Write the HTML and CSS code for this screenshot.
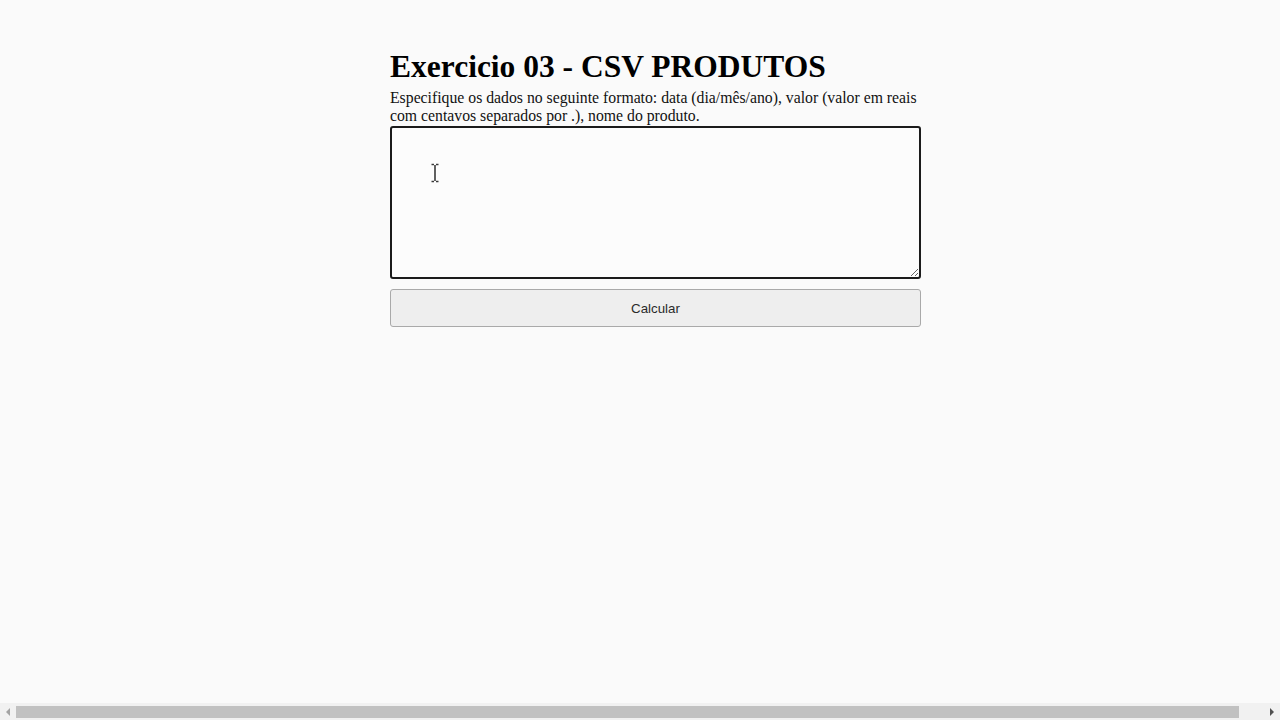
FILE: index.html
```html
<!DOCTYPE html>
<html lang="pt-BR">
<head>
<meta charset="utf-8">
<title>Exercicio 03 - CSV PRODUTOS</title>
<link rel="stylesheet" href="styles.css">
</head>
<body>
<div class="page">
  <main class="container">
    <h1 class="title">Exercicio 03 - CSV PRODUTOS</h1>
    <p class="hint">Especifique os dados no seguinte formato: data (dia/mês/ano), valor (valor em reais com centavos separados por .), nome do produto.</p>
    <textarea class="input"></textarea>
    <button class="btn" type="button">Calcular</button>
  </main>
</div>
<svg class="ibeam" width="10" height="20" viewBox="0 0 10 20" aria-hidden="true">
  <path d="M1.5 1.5h2.5M6 1.5h2.5M5 2v16M1.5 18.5h2.5M6 18.5h2.5" stroke="#fff" stroke-width="3.2" fill="none"/>
  <path d="M1.5 1.5h2.5M6 1.5h2.5M5 2v16M1.5 18.5h2.5M6 18.5h2.5" stroke="#3a3a3a" stroke-width="1.6" fill="none"/>
</svg>
<div class="hscroll">
  <span class="arrow arrow-left"></span>
  <div class="track"><div class="thumb"></div></div>
  <span class="arrow arrow-right"></span>
</div>
</body>
</html>
```

FILE: styles.css
```css
html, body {
  margin: 0;
  padding: 0;
  background: #fafafa;
}

body {
  font-family: "Liberation Serif", "Times New Roman", serif;
  color: #000;
  height: 720px;
  overflow: hidden;
}

.page {
  display: flex;
  justify-content: center;
  padding: 49px 0 0 31px;
}

.container {
  width: 531px;
  display: flex;
  flex-direction: column;
}

.title {
  margin: 0 0 4px;
  font-size: 31.5px;
  font-weight: bold;
  line-height: 36px;
}

.hint {
  margin: 0;
  font-size: 15.75px;
  line-height: 18px;
  color: #111;
}

.input {
  display: block;
  box-sizing: border-box;
  width: 531px;
  height: 153px;
  margin: 1px 0 0;
  border: 2px solid #1b1b1b;
  border-radius: 3px;
  background: #fcfcfc;
  font-family: "Liberation Mono", monospace;
  font-size: 13px;
  outline: none;
}

.btn {
  display: block;
  box-sizing: border-box;
  width: 531px;
  height: 38px;
  margin-top: 10px;
  padding-bottom: 1px;
  border: 1px solid #a9a9a9;
  border-radius: 3px;
  background: #eeeeee;
  color: #2a2a2a;
  font-family: "Liberation Sans", Arial, sans-serif;
  font-size: 13.3px;
}

.ibeam {
  position: absolute;
  left: 430px;
  top: 163px;
}

.hscroll {
  position: fixed;
  left: 0;
  right: 0;
  bottom: 0;
  height: 17px;
  background: #f1f1f1;
  display: flex;
  align-items: center;
}

.track {
  flex: 1;
  height: 100%;
  display: flex;
  align-items: center;
}

.thumb {
  width: 1223px;
  height: 12px;
  background: #c1c1c1;
}

.arrow {
  width: 16px;
  height: 17px;
  display: flex;
  align-items: center;
  justify-content: center;
}

.arrow::before {
  content: "";
  border-top: 4px solid transparent;
  border-bottom: 4px solid transparent;
}

.arrow-left::before {
  border-right: 4px solid #a3a3a3;
}

.arrow-right::before {
  border-left: 4px solid #505050;
}
```
